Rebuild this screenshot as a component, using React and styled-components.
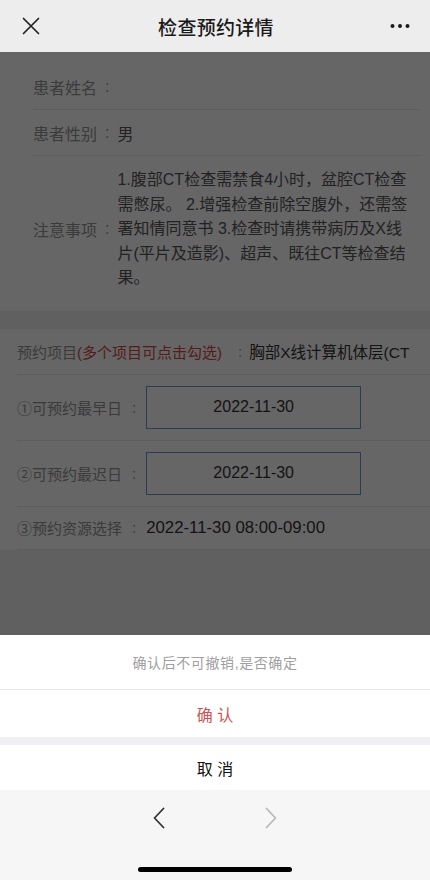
import React from 'react';
import styled, { createGlobalStyle } from 'styled-components';

const GlobalStyle = createGlobalStyle`
  html, body {
    margin: 0;
    padding: 0;
  }

  body {
    font-family: "Liberation Sans", "Noto Sans CJK SC", sans-serif;
    background: #ffffff;
  }

  * {
    box-sizing: border-box;
  }
`;

const Screen = styled.div`
  width: 430px;
  height: 880px;
  display: flex;
  flex-direction: column;
  overflow: hidden;
`;

const NavBar = styled.header`
  height: 52px;
  flex-shrink: 0;
  display: grid;
  grid-template-columns: 70px 1fr 70px;
  align-items: center;
  background: #ededed;
  padding: 0 20px 0 22px;
`;

const NavTitle = styled.h1`
  margin: 0;
  text-align: center;
  font-size: 19px;
  font-weight: 500;
  color: #1a1a1a;
  letter-spacing: 0.3px;
`;

const NavButton = styled.div`
  display: flex;
  align-items: center;
  justify-content: ${(p) => (p.$right ? 'flex-end' : 'flex-start')};
`;

const WebView = styled.main`
  flex: 1;
  position: relative;
  overflow: hidden;
  background: #f0f0f0;
`;

const Page = styled.div`
  display: flex;
  flex-direction: column;
  gap: 18px;
`;

const Card = styled.section`
  background: #ffffff;
  padding: ${(p) => p.$pad};
`;

const Row = styled.div`
  display: flex;
  align-items: center;
  height: ${(p) => p.$h || 'auto'};
  padding: ${(p) => p.$pad || '0'};
  border-bottom: ${(p) => (p.$noLine ? 'none' : '1px solid #e8e8e8')};
  font-size: ${(p) => p.$size || '16px'};
  white-space: nowrap;
`;

const Label = styled.span`
  flex-shrink: 0;
  color: #939393;
`;

const Hint = styled.span`
  color: #d64545;
`;

const Colon = styled.span`
  flex-shrink: 0;
  padding: ${(p) => p.$pad || '0 8px'};
  color: #939393;
`;

const Value = styled.span`
  color: ${(p) => p.$tone || '#333333'};
  font-size: ${(p) => p.$size || 'inherit'};
`;

const Notes = styled.p`
  margin: 0;
  flex: 1;
  white-space: nowrap;
  color: #555555;
  font-size: 16px;
  line-height: 24.5px;
`;

const DateBox = styled.div`
  width: 215px;
  height: 43px;
  display: flex;
  align-items: center;
  justify-content: center;
  border: 1px solid #6f93d3;
  color: #333333;
  font-size: 16px;
`;

const Mask = styled.div`
  position: absolute;
  inset: 0;
  background: rgba(0, 0, 0, 0.6);
`;

const Sheet = styled.div`
  position: absolute;
  left: 0;
  right: 0;
  bottom: 0;
  background: #ffffff;
  display: flex;
  flex-direction: column;
`;

const SheetItem = styled.div`
  height: ${(p) => p.$h};
  display: flex;
  align-items: center;
  justify-content: center;
  border-bottom: ${(p) => (p.$line ? '1px solid #e6e6e6' : 'none')};
  font-size: ${(p) => p.$size || '16px'};
  color: ${(p) => p.$color};
  letter-spacing: ${(p) => p.$spacing || '0'};
`;

const SheetGap = styled.div`
  height: 8px;
  background: #f0eff4;
`;

const Toolbar = styled.footer`
  height: 90px;
  flex-shrink: 0;
  background: #f6f6f6;
  display: flex;
  flex-direction: column;
  align-items: center;
`;

const ArrowRow = styled.div`
  height: 56px;
  display: flex;
  align-items: center;
  justify-content: center;
  gap: 100px;
`;

const HomeBar = styled.div`
  margin-top: 21px;
  width: 154px;
  height: 5px;
  border-radius: 3px;
  background: #000000;
`;

const CloseIcon = () => (
  <svg width="18" height="18" viewBox="0 0 18 18">
    <path d="M1.5 1.5 L16.5 16.5 M16.5 1.5 L1.5 16.5" stroke="#222" strokeWidth="1.7" strokeLinecap="round" />
  </svg>
);

const MoreIcon = () => (
  <svg width="20" height="6" viewBox="0 0 20 6">
    <circle cx="2.5" cy="3" r="2" fill="#1a1a1a" />
    <circle cx="10" cy="3" r="2" fill="#1a1a1a" />
    <circle cx="17.5" cy="3" r="2" fill="#1a1a1a" />
  </svg>
);

const Chevron = ({ dir, color }) => (
  <svg width="12" height="22" viewBox="0 0 12 22">
    <path
      d={dir === 'left' ? 'M10.5 1.5 L1.5 11 L10.5 20.5' : 'M1.5 1.5 L10.5 11 L1.5 20.5'}
      fill="none"
      stroke={color}
      strokeWidth="1.8"
      strokeLinecap="round"
      strokeLinejoin="round"
    />
  </svg>
);

export default function App() {
  return (
    <>
      <GlobalStyle />
      <Screen>
        <NavBar>
          <NavButton>
            <CloseIcon />
          </NavButton>
          <NavTitle>检查预约详情</NavTitle>
          <NavButton $right>
            <MoreIcon />
          </NavButton>
        </NavBar>

        <WebView>
          <Page>
            <Card $pad="12px 10px 0 33px">
              <Row $h="46px">
                <Label>患者姓名</Label>
                <Colon>:</Colon>
              </Row>
              <Row $h="46px">
                <Label>患者性别</Label>
                <Colon>:</Colon>
                <Value $tone="#555555">男</Value>
              </Row>
              <Row $pad="12px 0 20px 0" $noLine>
                <Label>注意事项</Label>
                <Colon>:</Colon>
                <Notes>
                  1.腹部CT检查需禁食4小时，盆腔CT检查<br />
                  需憋尿。 2.增强检查前除空腹外，还需签<br />
                  署知情同意书 3.检查时请携带病历及X线<br />
                  片(平片及造影)、超声、既往CT等检查结<br />
                  果。
                </Notes>
              </Row>
            </Card>

            <Card $pad="0 0 0 17px">
              <Row $h="46px" $size="15px">
                <Label>
                  预约项目<Hint>(多个项目可点击勾选)</Hint>
                </Label>
                <Colon $pad="0 7px 0 16px">:</Colon>
                <Value $size="15.5px">胸部X线计算机体层(CT</Value>
              </Row>
              <Row $pad="11px 0" $size="15px">
                <Label>①可预约最早日</Label>
                <Colon $pad="0 10px">:</Colon>
                <DateBox>2022-11-30</DateBox>
              </Row>
              <Row $pad="11px 0" $size="15px">
                <Label>②可预约最迟日</Label>
                <Colon $pad="0 10px">:</Colon>
                <DateBox>2022-11-30</DateBox>
              </Row>
              <Row $h="43px" $size="15px">
                <Label>③预约资源选择</Label>
                <Colon $pad="0 10px">:</Colon>
                <Value $size="16.8px">2022-11-30 08:00-09:00</Value>
              </Row>
            </Card>
          </Page>

          <Mask />

          <Sheet>
            <SheetItem $h="55px" $line $size="14px" $color="#a0a0a0" $spacing="0.6px">
              确认后不可撤销,是否确定
            </SheetItem>
            <SheetItem $h="47px" $color="#c85555">
              确 认
            </SheetItem>
            <SheetGap />
            <SheetItem $h="45px" $color="#111111">
              取 消
            </SheetItem>
          </Sheet>
        </WebView>

        <Toolbar>
          <ArrowRow>
            <Chevron dir="left" color="#333333" />
            <Chevron dir="right" color="#b8b8b8" />
          </ArrowRow>
          <HomeBar />
        </Toolbar>
      </Screen>
    </>
  );
}
